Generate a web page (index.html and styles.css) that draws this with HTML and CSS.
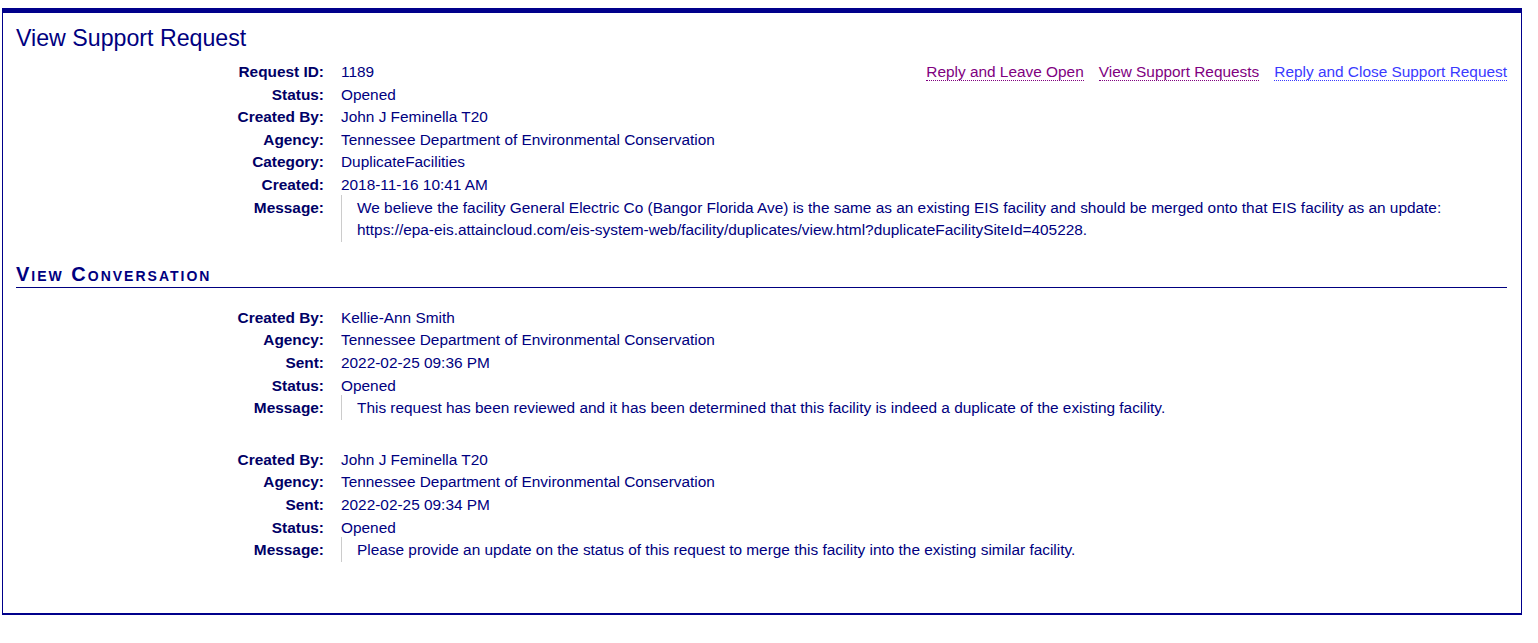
FILE: index.html
```html
<html>
  <head>
    <title>View Support Request</title>
    <link rel="stylesheet" href="styles.css">
  </head>
  <body>
    <div class="panel">
      <h1 class="page-title">View Support Request</h1>

      <!-- Request details -->
      <div class="fields">
        <div class="row">
          <span class="label">Request ID:</span>
          <span class="value">1189</span>
          <span class="actions">
            <a href="#" class="action visited">Reply and Leave Open</a>
            <a href="#" class="action visited">View Support Requests</a>
            <a href="#" class="action">Reply and Close Support Request</a>
          </span>
        </div>
        <div class="row"><span class="label">Status:</span><span class="value">Opened</span></div>
        <div class="row"><span class="label">Created By:</span><span class="value">John J Feminella T20</span></div>
        <div class="row"><span class="label">Agency:</span><span class="value">Tennessee Department of Environmental Conservation</span></div>
        <div class="row"><span class="label">Category:</span><span class="value">DuplicateFacilities</span></div>
        <div class="row"><span class="label">Created:</span><span class="value">2018-11-16 10:41 AM</span></div>
        <div class="row">
          <span class="label">Message:</span>
          <span class="value message">We believe the facility General Electric Co (Bangor Florida Ave) is the same as an existing EIS facility and should be merged onto that EIS facility as an update: https://epa-eis.attaincloud.com/eis-system-web/facility/duplicates/view.html?duplicateFacilitySiteId=405228.</span>
        </div>
      </div>

      <h2 class="section-title">View Conversation</h2>

      <!-- Conversation entries -->
      <div class="fields entry">
        <div class="row"><span class="label">Created By:</span><span class="value">Kellie-Ann Smith</span></div>
        <div class="row"><span class="label">Agency:</span><span class="value">Tennessee Department of Environmental Conservation</span></div>
        <div class="row"><span class="label">Sent:</span><span class="value">2022-02-25 09:36 PM</span></div>
        <div class="row"><span class="label">Status:</span><span class="value">Opened</span></div>
        <div class="row">
          <span class="label">Message:</span>
          <span class="value message">This request has been reviewed and it has been determined that this facility is indeed a duplicate of the existing facility.</span>
        </div>
      </div>

      <div class="fields entry">
        <div class="row"><span class="label">Created By:</span><span class="value">John J Feminella T20</span></div>
        <div class="row"><span class="label">Agency:</span><span class="value">Tennessee Department of Environmental Conservation</span></div>
        <div class="row"><span class="label">Sent:</span><span class="value">2022-02-25 09:34 PM</span></div>
        <div class="row"><span class="label">Status:</span><span class="value">Opened</span></div>
        <div class="row">
          <span class="label">Message:</span>
          <span class="value message">Please provide an update on the status of this request to merge this facility into the existing similar facility.</span>
        </div>
      </div>
    </div>
  </body>
</html>
```

FILE: styles.css
```css
body {
  margin: 8px 16px 0 2px;
  font-family: "Liberation Sans", Arial, sans-serif;
  font-size: 15.4px;
  color: #000080;
  background: #fff;
}

.panel {
  border: 1px solid #00008b;
  border-top: 5px solid #00008b;
  border-bottom: 2px solid #00008b;
  padding: 11px 14px 51px 13px;
}

.page-title {
  margin: 0 0 9px 0;
  font-size: 23.2px;
  font-weight: normal;
  line-height: 28px;
  color: #000080;
}

.row {
  display: flex;
  align-items: flex-start;
  line-height: 22.6px;
}

.label {
  flex: 0 0 308px;
  text-align: right;
  font-weight: bold;
  color: #000066;
}

.value {
  margin-left: 17px;
}

.value.message {
  flex: 1;
  border-left: 1px solid #cccccc;
  padding-left: 15px;
  margin-top: -2px;
  padding-top: 2px;
}

.actions {
  margin-left: auto;
  display: flex;
  gap: 15px;
}

.action {
  color: #3a3aff;
  text-decoration: none;
  border-bottom: 1px dotted currentColor;
  line-height: 17px;
  margin-top: 2px;
}

.action.visited {
  color: #800080;
}

.section-title {
  margin: 21px 0 0 0;
  font-size: 20px;
  font-variant: small-caps;
  font-weight: bold;
  letter-spacing: 2px;
  line-height: 22px;
  color: #000080;
  border-bottom: 1px solid #000080;
  padding-bottom: 2px;
}

.entry {
  margin-top: 19px;
}

.entry + .entry {
  margin-top: 29px;
}
```
